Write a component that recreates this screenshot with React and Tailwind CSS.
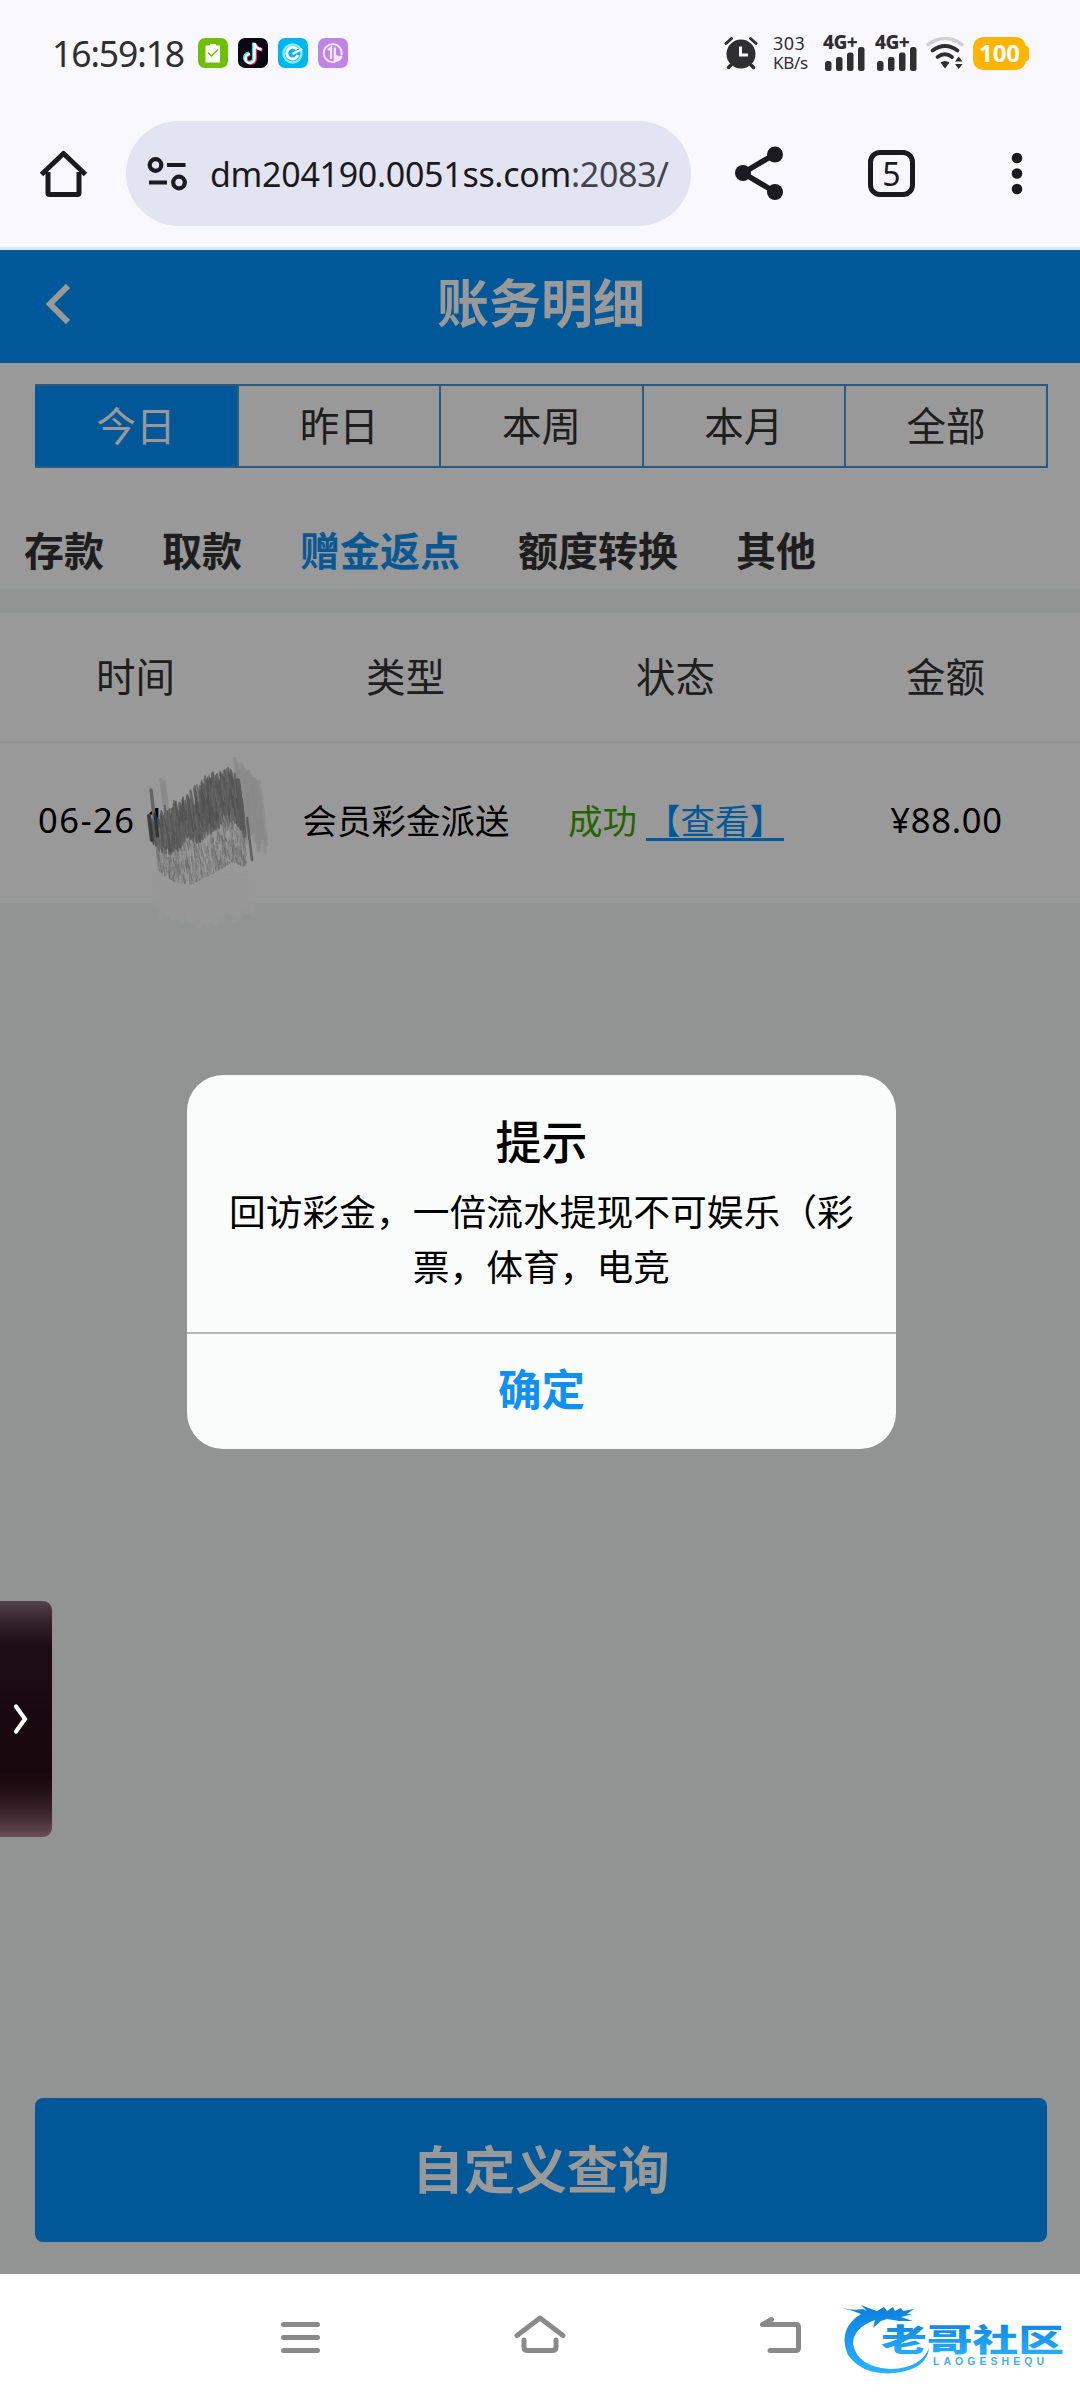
import React from 'react';

const ranges = ['今日', '昨日', '本周', '本月', '全部'];
const categories = ['存款', '取款', '赠金返点', '额度转换', '其他'];
const columns = ['时间', '类型', '状态', '金额'];

function AlarmIcon() {
  return (
    <svg width="34" height="34" viewBox="0 0 34 34" fill="none" stroke="#2f2f31" strokeLinecap="round">
      <circle cx="17" cy="18" r="14.5" fill="#2f2f31" stroke="none" />
      <path d="M2 7.5 L7.5 2.5 M32 7.5 L26.500 2.5" strokeWidth="3" />
      <path d="M7 29 L4.500 31.500 M27 29 L29.500 31.500" strokeWidth="3.5" />
      <path d="M16.500 10.500 V19 H24" stroke="#f9f8ff" strokeWidth="3" strokeLinecap="butt" />
    </svg>
  );
}

function Signal() {
  return (
    <div className="flex w-[42px] flex-col">
      <span className="h-[12px] whitespace-nowrap font-['Noto_Sans'] text-[19px] font-extrabold leading-[14px] tracking-[-0.5px] text-[#2f2f31]">4G+</span>
      <svg width="42" height="25" viewBox="0 0 42 25" fill="#2f2f31">
        <rect x="2" y="14" width="6.500" height="10" rx="2.500" />
        <rect x="13" y="10" width="6.500" height="14" rx="2.500" />
        <rect x="24" y="5.500" width="6.500" height="18.500" rx="2.500" />
        <rect x="35" y="0" width="6.500" height="24" rx="2.500" />
      </svg>
    </div>
  );
}

function WifiIcon() {
  return (
    <svg width="38" height="34" viewBox="0 0 38 34" fill="none" strokeLinecap="round">
      <path d="M2 8.500 Q19 -3.500 36 8.500" stroke="#d0cfd6" strokeWidth="3.500" />
      <path d="M6.500 14.500 Q19 5.500 31.500 14.500" stroke="#2f2f31" strokeWidth="3.800" />
      <path d="M11.500 21 Q19 15.500 26 21" stroke="#2f2f31" strokeWidth="3.800" />
      <path d="M14.500 26.500 Q19 23.500 23.500 26.500 L19 32.500 Z" fill="#2f2f31" />
      <path d="M29 25.500 L32.700 20.500 L36.500 25.500 Z M29 28 L32.700 33 L36.500 28 Z" fill="#2f2f31" />
    </svg>
  );
}

function AppIcons() {
  return (
    <div className="ml-[15px] flex gap-[10px]">
      <svg width="30" height="30" viewBox="0 0 30 30">
        <rect width="30" height="30" rx="7" fill="#6fbf09" />
        <path d="M7.500 7.500 H12 V6 H18 V7.500 H22 V24.500 H7.500 Z" fill="#fff" />
        <path d="M10 14.500 L13.500 18 L20 11.500" fill="none" stroke="#6fbf09" strokeWidth="1.500" />
      </svg>
      <svg width="30" height="30" viewBox="0 0 30 30" fill="none">
        <rect width="30" height="30" rx="7" fill="#080814" />
        <path d="M15.500 4.500 V20 A4.500 4.500 0 1 1 11 15.200 M15.500 5 Q17 10.500 23 11" stroke="#25e5df" strokeWidth="3.200" />
        <path d="M17.500 5.500 V21 A4.500 4.500 0 1 1 12.500 16.500 M17.500 6 Q19 11 24.500 12" stroke="#f62a58" strokeWidth="3" />
        <path d="M16.500 5 V20.500 A4.500 4.500 0 1 1 12 16 M16.500 5.500 Q18 10.500 23.500 11.500" stroke="#fff" strokeWidth="2.600" />
      </svg>
      <svg width="30" height="30" viewBox="0 0 30 30" fill="none">
        <rect width="30" height="30" rx="7" fill="#02b5ee" />
        <circle cx="14.500" cy="15.500" r="9" stroke="#7deeff" strokeWidth="2.500" />
        <path d="M19 11.500 A5.800 5.800 0 1 0 20 17" stroke="#fff" strokeWidth="3" />
        <path d="M14.500 16 L24 11" stroke="#fff" strokeWidth="2.500" />
      </svg>
      <svg width="30" height="30" viewBox="0 0 30 30" fill="none" stroke="#f7e9ff">
        <rect width="30" height="30" rx="7" fill="#c084e6" stroke="none" />
        <path d="M23.500 17 A9 9 0 1 0 17 23.800" strokeWidth="1.800" />
        <path d="M10 12 L13 9.500 V21 M19.500 17.500 L16.800 20.500 V9.500" strokeWidth="2.200" />
        <path d="M16 24 Q18 18.500 24 18 Q24 23 16 24 Z" fill="#f7e9ff" strokeWidth="1" />
      </svg>
    </div>
  );
}

function StatusBar() {
  return (
    <div className="flex h-[106px] shrink-0 items-center pl-[52px] pr-[51px] text-[#2f2f31]">
      <span className="w-[131px] whitespace-nowrap pt-[2px] font-['Noto_Sans'] text-[35.5px] tracking-[-1.1px]">16:59:18</span>
      <AppIcons />
      <div className="ml-auto flex items-center">
        <AlarmIcon />
        <div className="ml-[15px] flex w-[36px] flex-col font-['Noto_Sans'] text-[18px] leading-[20px]">
          <span className="tracking-[0.4px]">303</span>
          <span className="text-[17px] tracking-[-0.3px]">KB/s</span>
        </div>
        <div className="ml-[14px] flex gap-[10px]">
          <Signal />
          <Signal />
        </div>
        <div className="ml-[9px]"><WifiIcon /></div>
        <div className="ml-[9px] flex items-center">
          <div className="flex h-[33px] w-[53px] items-center justify-center rounded-[10px] bg-[#ffb400] font-['Noto_Sans'] text-[24px] font-bold leading-none text-white">100</div>
          <div className="h-[15px] w-[3px] rounded-r-[3px] bg-[#ffb400]" />
        </div>
      </div>
    </div>
  );
}

function BrowserBar() {
  return (
    <div className="flex h-[141px] shrink-0 items-start pl-[39px] pt-[15px]">
      <svg className="mt-[28px]" width="49" height="49" viewBox="0 0 49 49" fill="none" stroke="#1a1a20" strokeWidth="5">
        <path d="M9 23 V44 Q9 45.500 10.500 45.500 H38.500 Q40 45.500 40 44 V23" />
        <path d="M2.500 25.500 L24.500 4.500 L46.500 25.500" strokeLinejoin="round" />
      </svg>
      <div className="ml-[38px] flex h-[105px] w-[565px] items-center rounded-full bg-[#e3e4f1] pl-[21px]">
        <svg width="42" height="36" viewBox="0 0 42 36" fill="none" stroke="#1a1a20" strokeWidth="4.200">
          <circle cx="8.500" cy="9" r="5.800" />
          <path d="M20 9 H38.500 M2 26.500 H20" />
          <circle cx="32" cy="26.500" r="5.800" />
        </svg>
        <span className="ml-[21px] whitespace-nowrap pt-[1px] font-['Noto_Sans'] text-[34px] tracking-[-0.3px] text-[#1a1a20]">
          dm204190.0051ss.com<span className="text-[#44444f]">:2083/</span>
        </span>
      </div>
      <svg className="ml-[43px] mt-[25px]" width="50" height="54" viewBox="0 0 50 54" fill="#1a1a20">
        <path d="M41 8 L9 27 L41 46" fill="none" stroke="#1a1a20" strokeWidth="5.500" />
        <circle cx="41" cy="8.500" r="8" />
        <circle cx="9" cy="27" r="8" />
        <circle cx="41" cy="46" r="8" />
      </svg>
      <div className="ml-[84px] mt-[29px] flex h-[47px] w-[47px] items-center justify-center rounded-[12px] border-[5px] border-[#1a1a20] font-['Noto_Sans'] text-[32px] leading-none text-[#1a1a20]">5</div>
      <svg className="ml-[95px] mt-[31px]" width="14" height="44" viewBox="0 0 14 44" fill="#1a1a20">
        <circle cx="7" cy="6" r="5.300" />
        <circle cx="7" cy="21.500" r="5.300" />
        <circle cx="7" cy="37" r="5.300" />
      </svg>
    </div>
  );
}

// interpolates a [x, y] profile at x
function at(points, x) {
  for (let i = 1; i < points.length; i++) {
    const [x0, y0] = points[i - 1];
    const [x1, y1] = points[i];
    if (x <= x1) return y0 + ((y1 - y0) * (x - x0)) / (x1 - x0);
  }
  return points[points.length - 1][1];
}

const darkTop = [[3, 62], [10, 68], [16, 56], [24, 56], [27, 44], [30, 54], [38, 46], [44, 40], [48, 34], [54, 30], [62, 22], [72, 22], [80, 14], [86, 22], [94, 32]];
const darkBottom = [[3, 88], [10, 96], [20, 100], [28, 94], [36, 82], [46, 88], [54, 80], [62, 76], [72, 66], [82, 66], [88, 74], [94, 78]];
const greyBottom = [[8, 122], [24, 134], [40, 136], [60, 126], [80, 114], [92, 118], [106, 106]];

function strokes() {
  let seed = 7;
  const rnd = () => {
    seed = (seed * 16807) % 2147483647;
    return seed / 2147483647;
  };
  const out = [];
  const add = (x, y1, y2, color, width, opacity) =>
    out.push({ d: `M${x.toFixed(1)} ${y1.toFixed(1)} L${(x + (y2 - y1) * 0.12).toFixed(1)} ${y2.toFixed(1)}`, color, width, opacity });

  for (let x = 6; x < 104; x += 2) add(x, 124, 160 + rnd() * 16 - Math.abs(x - 50) * 0.2, '#989898', 6, 0.5);
  for (let x = 88; x < 114; x += 2) add(x, 6 + (x - 88) * 0.8 + rnd() * 10, 70 + rnd() * 32, '#868686', 3.500, 0.5);
  for (let x = 14; x < 20; x += 3) add(x, 26 + rnd() * 5, 60, '#858585', 3, 0.7);
  for (let i = 0; i < 900; i++) {
    const x = 8 + rnd() * 88;
    const top = at(darkBottom, x) - 14;
    const bottom = at(greyBottom, x) - 4;
    const y = top + rnd() * (bottom - top);
    add(x + (y - top) * 0.08, y, Math.min(bottom, y + 2 + rnd() * 9), ['#6a6a6a', '#7c7c7c', '#8e8e8e'][i % 3], 1.1, 0.75);
  }
  // the dark mass is built from short dabs so its edges stay ragged
  for (let i = 0; i < 1100; i++) {
    const x = 3 + rnd() * 91;
    const top = at(darkTop, x) + Math.sin(x * 1.7) * 3;
    const bottom = at(darkBottom, x) + Math.sin(x * 2.3) * 4;
    const y = top + rnd() * (bottom - top - 6);
    add(x + (y - top) * 0.1, y, Math.min(bottom, y + 6 + rnd() * 14), ['#505050', '#5e5e5e', '#575757', '#686868'][i % 4], 1.700, 0.8);
  }
  add(4, 38, 68, '#666', 3.500, 1);
  add(2, 64, 88, '#3d3d3d', 4, 1);
  add(8, 62, 84, '#2d2d2d', 3, 0.9);
  add(91, 28, 84, '#5a5a5a', 4, 0.8);
  add(100, 66, 108, '#5a5a5a', 2.500, 0.9);
  return out;
}

function Scribble() {
  return (
    <svg className="absolute left-[147px] top-[9px] z-20" width="126" height="186" viewBox="0 0 126 186" fill="none" strokeLinecap="round">
      {strokes().map((s, i) => (
        <path key={i} d={s.d} stroke={s.color} strokeWidth={s.width} opacity={s.opacity} />
      ))}
    </svg>
  );
}

function Records() {
  return (
    <div>
      <div className="grid h-[130px] grid-cols-4 border-b-2 border-[#eeefef] bg-white text-[39.500px] text-[#333]">
        {columns.map((c) => (
          <div key={c} className="flex items-center justify-center pb-[4px] pl-[1px]">{c}</div>
        ))}
      </div>
      <div className="relative grid h-[160px] grid-cols-4 bg-white pb-[7px] text-[34.500px] text-black">
        <div className="flex items-center whitespace-nowrap pl-[38px] font-['Noto_Sans'] tracking-[1.5px]">06-26 1</div>
        <Scribble />
        <div className="flex items-center justify-center pl-[2px]">会员彩金派送</div>
        <div className="flex items-center justify-center gap-[9px] whitespace-nowrap pl-[2px]">
          <span className="text-[#3ea600]">成功</span>
          <span className="text-[#0093ff] underline decoration-[3px] underline-offset-[4px]">【查看】</span>
        </div>
        <div className="flex items-center justify-center pl-[3px] font-['Noto_Sans'] tracking-[0.8px]">¥88.00</div>
      </div>
    </div>
  );
}

function Dialog() {
  return (
    <div className="absolute left-[187px] top-[825px] z-30 flex h-[374px] w-[709px] flex-col rounded-[36px] bg-[#fafcfb] text-center text-black">
      <div className="flex h-[257px] flex-col pt-[32px]">
        <h2 className="text-[46px] font-medium leading-[64px]">提示</h2>
        <p className="mx-auto mt-[12px] w-[630px] text-[36.750px] leading-[55px]">
          回访彩金，一倍流水提现不可娱乐（彩
          <br />
          票，体育，电竞
        </p>
      </div>
      <button className="flex-1 border-t-2 border-[#b3b7b5] pb-[7px] text-[43.500px] font-bold text-[#1090f2]">确定</button>
    </div>
  );
}

function Drawer() {
  return (
    <div className="absolute left-0 top-[1351px] z-30 flex h-[236px] w-[52px] items-center overflow-hidden rounded-r-[9px] bg-linear-to-b from-[#54424b] via-[#1c0810] to-[#6b4f59]">
      <div className="absolute inset-0 bg-linear-to-b from-transparent from-0% via-[#1b0b13] via-20% to-transparent" />
      <div className="absolute inset-0 bg-linear-to-b from-transparent from-20% via-[#17060c] via-72% to-transparent" />
      <svg className="relative ml-[12px]" width="18" height="32" viewBox="0 0 18 32" fill="none" stroke="#fff" strokeWidth="4.200" strokeLinecap="round">
        <path d="M4 3.500 L13 16 L4 28.500" />
      </svg>
    </div>
  );
}

function Page() {
  return (
    <div className="relative flex h-[2024px] shrink-0 flex-col bg-[#f3f7f5] font-['Noto_Sans_CJK_SC',sans-serif]">
      <header className="relative flex h-[113px] items-center justify-center bg-[#0093ff] pb-[11px] pl-[2px]">
        <svg className="absolute left-[45px] top-[34px]" width="26" height="40" viewBox="0 0 26 40" fill="none" stroke="#fff" strokeWidth="6">
          <path d="M23 2 L5 20 L23 38" />
        </svg>
        <h1 className="text-[52px] font-bold leading-none text-white">账务明细</h1>
      </header>
      <div className="h-[226px] bg-white pt-[21px]">
        <div className="mx-[35px] grid h-[84px] w-[1013px] grid-cols-5 border-y-2 border-r-2 border-[#4596d8] text-[39.500px] text-[#333]">
          {ranges.map((r, i) => (
            <div
              key={r}
              className={
                i === 0
                  ? 'flex items-center justify-center bg-[#0093ff] pb-[4px] text-white'
                  : 'flex items-center justify-center border-l-2 border-[#4596d8] pb-[4px]'
              }
            >
              {r}
            </div>
          ))}
        </div>
        <div className="mt-[51px] flex gap-[58px] pl-[24px] text-[40px] font-bold leading-[60px] text-[#333]">
          {categories.map((c) => (
            <span key={c} className={c === '赠金返点' ? 'text-[#0f93f5]' : ''}>{c}</span>
          ))}
        </div>
      </div>
      <div className="h-[24px] shrink-0" />
      <Records />
      <button className="mx-[35px] mb-[32px] mt-auto h-[144px] w-[1012px] rounded-[8px] bg-[#0093ff] pb-[7px] text-[51.500px] font-bold text-white">自定义查询</button>
      <div className="absolute inset-0 z-10 bg-black/40" />
      <Dialog />
      <Drawer />
    </div>
  );
}

function Watermark() {
  return (
    <svg className="absolute right-[14px] top-[28px]" width="225" height="76" viewBox="0 0 225 76">
      <defs>
        <linearGradient id="wm" x1="0" y1="0" x2="0" y2="1">
          <stop offset="0" stopColor="#0b7fdd" />
          <stop offset="1" stopColor="#2bb3ff" />
        </linearGradient>
      </defs>
      <path
        d="M1 6 Q12 9 22 7 L26 9 L20 3 Q27 6 36 9 L43 5 L46 9 L52 5 L54 9 L60 6 L62 9 L73 7 L66 12 L72 12 L60 15 L72 19 L58 19 L46 17 L40 19 L32 26 L34 18 Q12 26 12 42 Q16 65 50 67 Q80 66 88 46 Q86 67 54 71 Q22 74 7 53 Q-4 27 20 12 Q10 8 1 6 Z"
        fill="url(#wm)"
      />
      <text x="40" y="49" textLength="183" lengthAdjust="spacingAndGlyphs" fontFamily="'Noto Sans CJK SC', sans-serif" fontSize="30.500" fontWeight="900" fill="url(#wm)">老哥社区</text>
      <text x="92" y="62.500" textLength="111" fontFamily="'Liberation Sans', sans-serif" fontSize="10.500" fontWeight="700" fill="#45aef2">LAOGESHEQU</text>
    </svg>
  );
}

function NavBar() {
  return (
    <nav className="relative flex h-[126px] shrink-0 items-start bg-white pt-[40px]">
      <svg className="ml-[280px]" width="42" height="42" viewBox="0 0 42 42" fill="none" stroke="#8a8a8a" strokeWidth="5" strokeLinecap="round">
        <path d="M3.500 10.500 H37.500 M3.500 23.500 H37.500 M3.500 36.500 H37.500" />
      </svg>
      <svg className="ml-[190px]" width="56" height="42" viewBox="0 0 56 42" fill="none" stroke="#8a8a8a" strokeWidth="5" strokeLinecap="round" strokeLinejoin="round">
        <path d="M5 21.500 L28 4 L51 21.500" />
        <path d="M12 26 V33 Q12 36.500 15.500 36.500 H40.500 Q44 36.500 44 33 V26" />
      </svg>
      <svg className="ml-[189px]" width="46" height="42" viewBox="0 0 46 42" fill="none" stroke="#8a8a8a" strokeWidth="5" strokeLinecap="round" strokeLinejoin="round">
        <path d="M14.500 5.500 L5.500 10.500 H39 Q41.500 10.500 41.500 13 V34 Q41.500 36.500 39 36.500 H13" />
      </svg>
      <Watermark />
    </nav>
  );
}

export default function App() {
  return (
    <div className="flex h-[2400px] w-[1080px] flex-col overflow-hidden bg-[#f9f8ff]">
      <StatusBar />
      <BrowserBar />
      <div className="h-[3px] shrink-0 bg-[#dbe4fb]" />
      <Page />
      <NavBar />
    </div>
  );
}
